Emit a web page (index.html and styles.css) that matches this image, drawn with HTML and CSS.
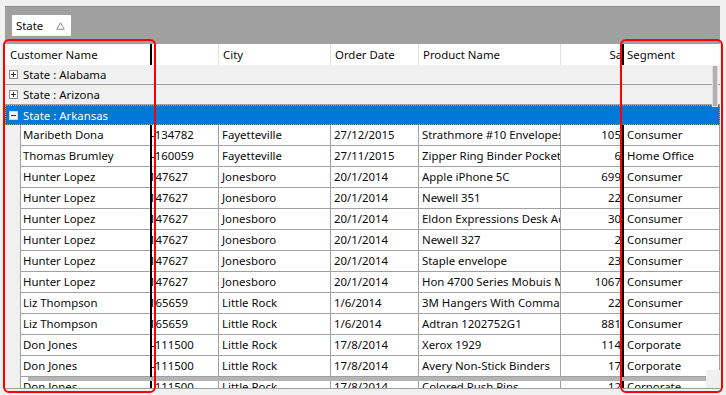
FILE: index.html
```html
<!DOCTYPE html>
<html>
<head>
<meta charset="utf-8">
<link rel="stylesheet" href="styles.css">
</head>
<body>
<div class="app">
  <div class="groupbar">
    <div class="chip"><span>State</span><svg class="tri" width="9" height="8" viewBox="0 0 9 8"><path d="M4.5 0.8 L8.3 7.3 L0.7 7.3 Z" fill="none" stroke="#8a8a8a" stroke-width="1"/></svg></div>
  </div>
  <div class="grid">
    <div class="row head">
      <div class="hcell hname">Customer Name</div>
      <div class="bar"></div>
      <div class="scroll">
        <div class="hcell c-id"></div>
        <div class="hcell c-city">City</div>
        <div class="hcell c-date">Order Date</div>
        <div class="hcell c-prod">Product Name</div>
        <div class="hcell c-sales">Sales</div>
      </div>
      <div class="bar"></div>
      <div class="hcell c-seg">Segment</div>
    </div>

    <div class="grow"><svg class="tog" width="9" height="9" viewBox="0 0 9 9"><rect x="0.5" y="0.5" width="8" height="8" fill="#fff" stroke="#8c8c8c"/><path d="M2 4.5 H7 M4.5 2 V7" stroke="#333" stroke-width="1"/></svg><span>State : Alabama</span></div>
    <div class="grow"><svg class="tog" width="9" height="9" viewBox="0 0 9 9"><rect x="0.5" y="0.5" width="8" height="8" fill="#fff" stroke="#8c8c8c"/><path d="M2 4.5 H7 M4.5 2 V7" stroke="#333" stroke-width="1"/></svg><span>State : Arizona</span></div>
    <div class="grow sel"><svg class="tog" width="9" height="9" viewBox="0 0 9 9"><rect x="0.5" y="0.5" width="8" height="8" fill="#f4f4f4" stroke="#cfd8e2"/><path d="M2 4.5 H7" stroke="#333" stroke-width="1"/></svg><span>State : Arkansas</span></div>

    <div class="row data">
      <div class="indent"></div><div class="cell name">Maribeth Dona</div><div class="bar"></div>
      <div class="scroll"><div class="cell c-id"><span class="cut-a">-134782</span></div><div class="cell c-city">Fayetteville</div><div class="cell c-date">27/12/2015</div><div class="cell c-prod">Strathmore #10 Envelopes</div><div class="cell c-sales">105.58</div></div>
      <div class="bar"></div><div class="cell c-seg">Consumer</div>
    </div>
    <div class="row data">
      <div class="indent"></div><div class="cell name">Thomas Brumley</div><div class="bar"></div>
      <div class="scroll"><div class="cell c-id"><span class="cut-a">-160059</span></div><div class="cell c-city">Fayetteville</div><div class="cell c-date">27/11/2015</div><div class="cell c-prod">Zipper Ring Binder Pockets</div><div class="cell c-sales">6.48</div></div>
      <div class="bar"></div><div class="cell c-seg">Home Office</div>
    </div>
    <div class="row data">
      <div class="indent"></div><div class="cell name">Hunter Lopez</div><div class="bar"></div>
      <div class="scroll"><div class="cell c-id"><span class="cut-b">147627</span></div><div class="cell c-city">Jonesboro</div><div class="cell c-date">20/1/2014</div><div class="cell c-prod">Apple iPhone 5C</div><div class="cell c-sales">699.93</div></div>
      <div class="bar"></div><div class="cell c-seg">Consumer</div>
    </div>
    <div class="row data">
      <div class="indent"></div><div class="cell name">Hunter Lopez</div><div class="bar"></div>
      <div class="scroll"><div class="cell c-id"><span class="cut-b">147627</span></div><div class="cell c-city">Jonesboro</div><div class="cell c-date">20/1/2014</div><div class="cell c-prod">Newell 351</div><div class="cell c-sales">22.72</div></div>
      <div class="bar"></div><div class="cell c-seg">Consumer</div>
    </div>
    <div class="row data">
      <div class="indent"></div><div class="cell name">Hunter Lopez</div><div class="bar"></div>
      <div class="scroll"><div class="cell c-id"><span class="cut-b">147627</span></div><div class="cell c-city">Jonesboro</div><div class="cell c-date">20/1/2014</div><div class="cell c-prod">Eldon Expressions Desk Accessory</div><div class="cell c-sales">30.56</div></div>
      <div class="bar"></div><div class="cell c-seg">Consumer</div>
    </div>
    <div class="row data">
      <div class="indent"></div><div class="cell name">Hunter Lopez</div><div class="bar"></div>
      <div class="scroll"><div class="cell c-id"><span class="cut-b">147627</span></div><div class="cell c-city">Jonesboro</div><div class="cell c-date">20/1/2014</div><div class="cell c-prod">Newell 327</div><div class="cell c-sales">2.64</div></div>
      <div class="bar"></div><div class="cell c-seg">Consumer</div>
    </div>
    <div class="row data">
      <div class="indent"></div><div class="cell name">Hunter Lopez</div><div class="bar"></div>
      <div class="scroll"><div class="cell c-id"><span class="cut-b">147627</span></div><div class="cell c-city">Jonesboro</div><div class="cell c-date">20/1/2014</div><div class="cell c-prod">Staple envelope</div><div class="cell c-sales">23.92</div></div>
      <div class="bar"></div><div class="cell c-seg">Consumer</div>
    </div>
    <div class="row data">
      <div class="indent"></div><div class="cell name">Hunter Lopez</div><div class="bar"></div>
      <div class="scroll"><div class="cell c-id"><span class="cut-b">147627</span></div><div class="cell c-city">Jonesboro</div><div class="cell c-date">20/1/2014</div><div class="cell c-prod">Hon 4700 Series Mobuis Mid-Back</div><div class="cell c-sales">1067.94</div></div>
      <div class="bar"></div><div class="cell c-seg">Consumer</div>
    </div>
    <div class="row data">
      <div class="indent"></div><div class="cell name">Liz Thompson</div><div class="bar"></div>
      <div class="scroll"><div class="cell c-id"><span class="cut-b">165659</span></div><div class="cell c-city">Little Rock</div><div class="cell c-date">1/6/2014</div><div class="cell c-prod">3M Hangers With Command Adhesive</div><div class="cell c-sales">22.96</div></div>
      <div class="bar"></div><div class="cell c-seg">Consumer</div>
    </div>
    <div class="row data">
      <div class="indent"></div><div class="cell name">Liz Thompson</div><div class="bar"></div>
      <div class="scroll"><div class="cell c-id"><span class="cut-b">165659</span></div><div class="cell c-city">Little Rock</div><div class="cell c-date">1/6/2014</div><div class="cell c-prod">Adtran 1202752G1</div><div class="cell c-sales">881.93</div></div>
      <div class="bar"></div><div class="cell c-seg">Consumer</div>
    </div>
    <div class="row data">
      <div class="indent"></div><div class="cell name">Don Jones</div><div class="bar"></div>
      <div class="scroll"><div class="cell c-id"><span class="cut-a">-111500</span></div><div class="cell c-city">Little Rock</div><div class="cell c-date">17/8/2014</div><div class="cell c-prod">Xerox 1929</div><div class="cell c-sales">114.46</div></div>
      <div class="bar"></div><div class="cell c-seg">Corporate</div>
    </div>
    <div class="row data">
      <div class="indent"></div><div class="cell name">Don Jones</div><div class="bar"></div>
      <div class="scroll"><div class="cell c-id"><span class="cut-a">-111500</span></div><div class="cell c-city">Little Rock</div><div class="cell c-date">17/8/2014</div><div class="cell c-prod">Avery Non-Stick Binders</div><div class="cell c-sales">17.94</div></div>
      <div class="bar"></div><div class="cell c-seg">Corporate</div>
    </div>
    <div class="row data">
      <div class="indent"></div><div class="cell name">Don Jones</div><div class="bar"></div>
      <div class="scroll"><div class="cell c-id"><span class="cut-a">-111500</span></div><div class="cell c-city">Little Rock</div><div class="cell c-date">17/8/2014</div><div class="cell c-prod">Colored Push Pins</div><div class="cell c-sales">12.44</div></div>
      <div class="bar"></div><div class="cell c-seg">Corporate</div>
    </div>

    <div class="vthumb"></div>
    <div class="hthumb"></div>
    <div class="corner"></div>
  </div>
  <div class="mark mark-left"></div>
  <div class="mark mark-right"></div>
</div>
</body>
</html>
```

FILE: styles.css
```css
html, body {
  margin: 0;
  padding: 0;
}
body {
  background: #f0f0f0;
  font-family: "Noto Sans", "Open Sans", sans-serif;
  font-size: 11.4px;
  color: #0a0a0a;
  width: 726px;
  height: 395px;
  overflow: hidden;
}
.app {
  position: relative;
  width: 726px;
  height: 395px;
  padding-top: 6px;
  box-sizing: border-box;
}
.groupbar {
  margin-left: 5px;
  width: 715px;
  height: 38px;
  box-sizing: border-box;
  background: #a0a0a0;
  border-top: 1px solid #8c8c8c;
  padding: 8px 0 0 7px;
}
.chip {
  width: 59px;
  height: 21px;
  background: #fff;
  display: flex;
  align-items: center;
  padding-left: 4px;
  box-sizing: border-box;
}
.chip .tri {
  margin-left: auto;
  margin-right: 6px;
}
.grid {
  position: relative;
  margin-left: 5px;
  width: 715px;
  height: 345px;
  box-sizing: border-box;
  border-bottom: 1px solid #a0a0a0;
  overflow: hidden;
  background: #fff;
}
.row {
  display: flex;
  height: 21px;
}
.head {
  background: #fff;
}
.hcell, .cell {
  box-sizing: border-box;
  height: 21px;
  line-height: 20px;
  white-space: nowrap;
  overflow: hidden;
  flex: none;
}
.hcell {
  border-right: 1px solid #e3e3e3;
  padding-left: 4px;
  line-height: 22px;
}
.hname {
  width: 145px;
  padding-left: 5px;
  border-right: none;
}
.bar {
  width: 2px;
  flex: none;
  background: #000;
}
.scroll {
  width: 470px;
  flex: none;
  display: flex;
  overflow: hidden;
}
.c-id { width: 67px; }
.c-city { width: 112px; }
.c-date { width: 88px; }
.c-prod { width: 142px; }
.c-sales { width: 80px; text-align: right; padding-right: 3px; padding-left: 0; }
.c-seg { width: 96px; padding-left: 3px; border-right: 1px solid #a0a0a0; }
.head .c-seg { border-right: none; }

.grow {
  height: 20px;
  box-sizing: border-box;
  background: #f0f0f0;
  border-bottom: 1px solid #a0a0a0;
  display: flex;
  align-items: center;
  padding-left: 4px;
}
.grow .tog {
  flex: none;
  margin-right: 5px;
}
.grow.sel {
  background: #0078d7;
  color: #fff;
  border: 1px dotted #b89a70;
  padding-left: 3px;
}

.data .indent {
  width: 15px;
  flex: none;
  background: #f0f0f0;
}
.data .cell {
  border-bottom: 1px solid #a0a0a0;
  border-right: 1px solid #a0a0a0;
  padding-left: 3px;
}
.data .name {
  width: 130px;
  border-left: 1px solid #a0a0a0;
  border-right: none;
  padding-left: 2px;
}
.data .c-id {
  padding-left: 0;
}
.data .c-sales {
  padding-left: 0;
}
.cut-a {
  margin-left: -1px;
}
.cut-b {
  display: inline-block;
  margin-left: -3px;
}

.vthumb {
  position: absolute;
  left: 707px;
  top: 22px;
  width: 4px;
  height: 40px;
  background: #b0b0b0;
  border: 1px solid #e0e0e0;
  border-top: none;
}
.hthumb {
  position: absolute;
  left: 23px;
  top: 333px;
  width: 678px;
  height: 4px;
  background: #b4b4b4;
}
.corner {
  position: absolute;
  left: 701px;
  top: 326px;
  width: 14px;
  height: 18px;
  background: #f0f0f0;
}
.mark {
  position: absolute;
  top: 39px;
  height: 354px;
  box-sizing: border-box;
  border: 2px solid #ff0000;
  border-radius: 6px;
}
.mark-left {
  left: 3px;
  width: 153px;
}
.mark-right {
  left: 620px;
  width: 103px;
}
```
